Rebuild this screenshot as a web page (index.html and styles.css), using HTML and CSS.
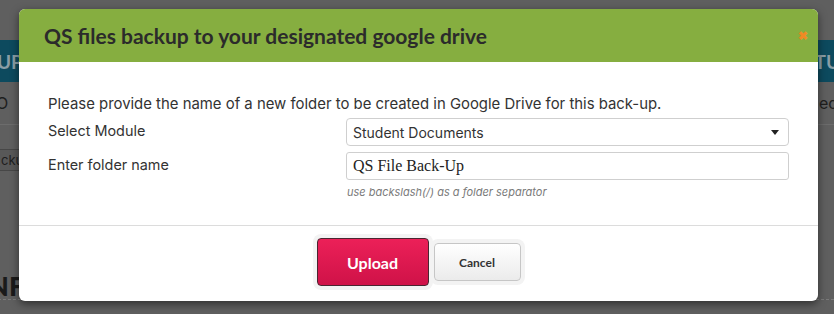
FILE: index.html
```html
<!DOCTYPE html>
<html lang="en">
<head>
  <meta charset="UTF-8">
  <title>QS files backup</title>
  <link rel="stylesheet" href="styles.css">
</head>
<body>

<div class="page">
  <div class="page-top"></div>
  <div class="page-bar">
    <span class="bar-left">UP</span>
    <span class="bar-right">TU</span>
  </div>
  <div class="page-row">
    <span class="row-left">O</span>
    <span class="row-right">ed</span>
  </div>
  <div class="page-tools">
    <span class="tool-btn">ckup</span>
  </div>
  <div class="page-heading">NF</div>
</div>

<div class="modal">
  <div class="modal-header">
    <h3 class="modal-title">QS files backup to your designated google drive</h3>
    <span class="modal-close">&#10006;</span>
  </div>
  <div class="modal-body">
    <p class="intro">Please provide the name of a new folder to be created in Google Drive for this back-up.</p>
    <div class="form-row">
      <label class="form-label">Select Module</label>
      <div class="select">
        <span>Student Documents</span>
        <span class="caret"></span>
      </div>
    </div>
    <div class="form-row">
      <label class="form-label">Enter folder name</label>
      <div class="field">
        <div class="input">QS File Back-Up</div>
        <div class="help">use backslash(/) as a folder separator</div>
      </div>
    </div>
  </div>
  <div class="modal-footer">
    <button class="btn btn-upload">Upload</button>
    <button class="btn btn-cancel">Cancel</button>
  </div>
</div>

</body>
</html>
```

FILE: styles.css
```css
* {
  box-sizing: border-box;
}

body {
  margin: 0;
  background-color: #5f5f5f;
  font-family: "Inter", Arial, sans-serif;
  color: #333;
  height: 314px;
  overflow: hidden;
  position: relative;
}

/* page behind the overlay */
.page-top {
  height: 40px;
}

.page-bar {
  height: 42px;
  background-color: #0d4a5e;
  display: flex;
  justify-content: space-between;
  align-items: center;
  color: #8a9ea6;
  font-weight: bold;
  font-size: 19px;
  font-family: "Lato", sans-serif;
}

.bar-left {
  margin-left: -3px;
}

.bar-right {
  margin-right: -6px;
}

.page-row {
  height: 43px;
  display: flex;
  justify-content: space-between;
  align-items: center;
  border-bottom: 1px solid #6c6c6c;
  color: #1e1e1e;
  font-size: 16px;
}

.row-left {
  margin-left: -4px;
}

.row-right {
  margin-right: -4px;
}

.page-tools {
  height: 148px;
  padding-top: 24px;
}

.tool-btn {
  display: inline-block;
  margin-left: -6px;
  padding: 2px 6px;
  font-size: 13px;
  color: #1e1e1e;
  background-color: #585858;
  border: 1px solid #474747;
  border-radius: 2px;
}

.page-heading {
  font-family: "Lato", sans-serif;
  font-size: 27px;
  font-weight: 900;
  color: #1a1a1a;
  margin-left: -12px;
  line-height: 26px;
  padding-bottom: 0;
  border-bottom: 1px dashed #7a7a7a;
}

/* modal */
.modal {
  position: absolute;
  left: 19px;
  top: 9px;
  width: 799px;
  height: 292px;
  background-color: #fff;
  border-radius: 6px;
  box-shadow: 0 3px 9px rgba(0,0,0,0.5);
  overflow: hidden;
}

.modal-header {
  height: 53px;
  background-color: #86ae40;
  display: flex;
  align-items: center;
  justify-content: space-between;
  padding: 0 10px 0 25px;
}

.modal-title {
  margin: 0;
  font-family: "Lato", sans-serif;
  font-size: 21px;
  font-weight: 700;
  color: #2b2b2b;
}

.modal-close {
  color: #f08a24;
  font-size: 12px;
  font-weight: bold;
}

.modal-body {
  padding: 33px 29px 0 29px;
  height: 164px;
  border-bottom: 1px solid #dcdcdc;
}

.intro {
  margin: 0 0 5px 0;
  font-size: 14.9px;
  line-height: 18px;
}

.form-row {
  display: grid;
  grid-template-columns: 298px 1fr;
  margin-bottom: 6px;
}

.form-label {
  font-size: 14.4px;
  line-height: 26px;
}

.select {
  height: 28px;
  border: 1px solid #cfcfcf;
  border-radius: 4px;
  display: flex;
  justify-content: space-between;
  align-items: center;
  padding: 0 9px 0 6px;
  font-size: 14px;
  color: #333;
  background-color: #fff;
}

.caret {
  width: 0;
  height: 0;
  border-left: 4px solid transparent;
  border-right: 4px solid transparent;
  border-top: 5px solid #222;
}

.input {
  height: 28px;
  border: 1px solid #cfcfcf;
  border-radius: 3px;
  padding: 0 6px;
  font-family: "Liberation Serif", serif;
  font-size: 16px;
  line-height: 26px;
  color: #222;
}

.help {
  margin-top: 5px;
  font-size: 11px;
  font-style: italic;
  color: #7a7a7a;
  padding-left: 1px;
}

.modal-footer {
  display: flex;
  justify-content: center;
  align-items: center;
  gap: 5px;
  padding-top: 12px;
}

.btn {
  border-radius: 4px;
  cursor: pointer;
  box-shadow: 0 0 0 4px #f3f3f3;
}

.btn-upload {
  width: 112px;
  height: 48px;
  background: linear-gradient(#ec2058, #cf1248);
  border: 1px solid #4a2530;
  color: #fff;
  font-family: "Lato", sans-serif;
  font-weight: 700;
  font-size: 16px;
}

.btn-cancel {
  width: 87px;
  height: 38px;
  background: linear-gradient(#ffffff, #ebebeb);
  border: 1px solid #c6c6c6;
  color: #333;
  font-family: "Lato", sans-serif;
  font-weight: 700;
  font-size: 12px;
}
```
